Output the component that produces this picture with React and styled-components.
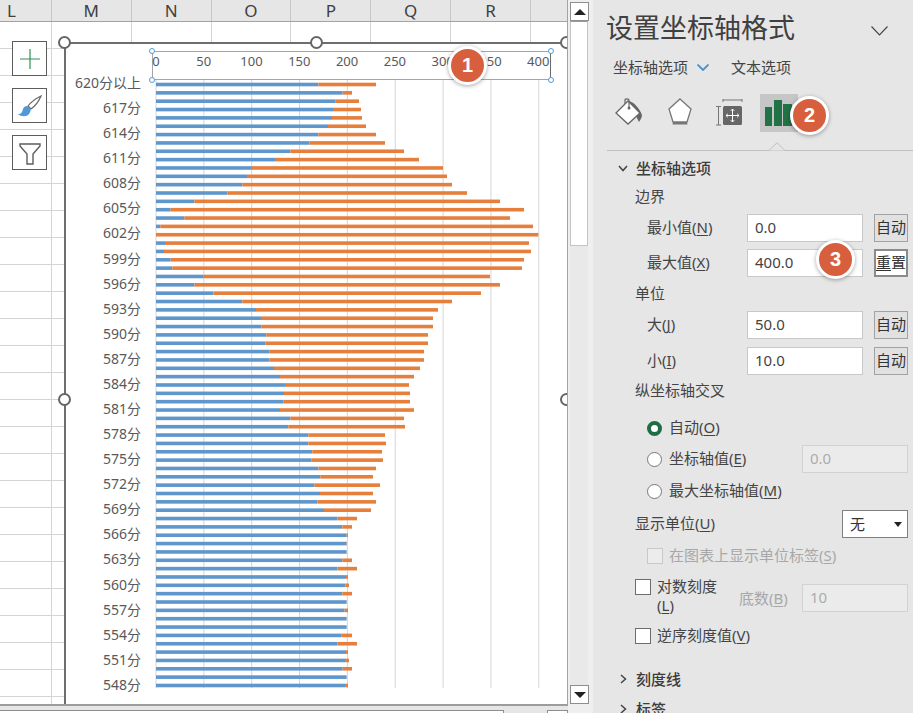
import React from "react";
import styled, { createGlobalStyle } from "styled-components";

const Global = createGlobalStyle`
  html, body { margin: 0; padding: 0; background: #e6e6e6; }
  body { font-family: "Noto Sans", "Noto Sans CJK SC", sans-serif; color: #444; }
`;

const App_ = styled.div`
  position: relative; width: 913px; height: 713px; overflow: hidden; display: flex;
`;
const Sheet = styled.div`
  width: 568px; height: 713px; flex: none; display: flex; flex-direction: column; background: #e6e6e6;
`;
const ColHeader = styled.div`
  height: 21px; flex: none; display: flex; margin-left: -28px; background: #e6e6e6; border-bottom: 1px solid #a3a3a3;
  border-right: 1px solid #a3a3a3; overflow: hidden;
`;
const ColCell = styled.div`
  width: 79.85px; flex: none; box-sizing: border-box; border-right: 1px solid #c6c6c6;
  font-size: 17px; line-height: 22px; text-align: center; color: #3f3f3f;
`;
const Grid = styled.div`
  position: relative; height: 682px; flex: none; overflow: hidden;
  border-right: 1px solid #a3a3a3; border-bottom: 2px solid #9c9c9c; box-sizing: content-box;
  background-color: #fff;
  background-image:
    repeating-linear-gradient(90deg, transparent 0, transparent 78.85px, #d4d4d4 78.85px, #d4d4d4 79.85px),
    repeating-linear-gradient(180deg, transparent 0, transparent 26px, #d4d4d4 26px, #d4d4d4 27px);
  background-position: 52px 0, 0 0;
  background-size: auto, auto;
  background-position-x: -28px, 0;
`;
const ChartTools = styled.div`
  position: absolute; left: 12px; top: 19px; display: flex; flex-direction: column; gap: 12px;
`;
const ToolButton = styled.div`
  width: 33px; height: 33px; background: #fff; border: 1px solid #5c5c5c;
  display: flex; align-items: center; justify-content: center;
`;
const Chart = styled.div`
  position: absolute; left: 64px; top: 20px; right: 0; bottom: -2px; background: #fff;
  border-left: 2px solid #6e6e6e; border-top: 2px solid #6e6e6e; display: flex;
`;
const CategoryColumn = styled.div`
  width: 75px; flex: none; padding-top: 26px; display: flex; flex-direction: column;
`;
const Category = styled.div`
  height: 25.08px; flex: none; line-height: 25px; font-size: 14px; text-align: right; color: #595959; white-space: nowrap;
`;
const PlotColumn = styled.div`
  margin-left: 9px; width: 410px; flex: none; display: flex; flex-direction: column; padding-top: 7px;
`;
const AxisBox = styled.div`
  position: relative; margin-left: 2px; width: 397px; height: 27px; flex: none;
  border: 1.5px solid #a6a6a6; border-right: 1px solid #6a6a6a; display: flex; align-items: center;
`;
const AxisTicks = styled.div`display: flex; margin-left: -21px; margin-bottom: 9px;`;
const Tick = styled.div`
  width: 47.8px; flex: none; text-align: center; font-size: 13px; line-height: 18px; color: #595959;
`;
const SmallHandle = styled.span`
  position: absolute; width: 4px; height: 4px; border-radius: 50%; background: #fff; border: 1px solid #4f9ad6;
  ${p => (p.$right ? "right: -4px;" : "left: -4px;")}
  ${p => (p.$bottom ? "bottom: -4px;" : "top: -4px;")}
`;
const BigHandle = styled.span`
  position: absolute; width: 9px; height: 9px; border-radius: 50%; background: #fff; border: 2.5px solid #666;
  ${p => p.$pos}
`;
const ScrollColumn = styled.div`
  width: 25px; flex: none; height: 713px; background: #efefef; padding: 2px 0 0 2px; box-sizing: border-box;
  display: flex; flex-direction: column;
`;
const ScrollTrack = styled.div`
  width: 18px; height: 702px; background: #e9e9e9; display: flex; flex-direction: column;
`;
const ScrollBtn = styled.div`
  height: 17px; flex: none; background: #fff; border: 1px solid #8e8e8e; width: 17px;
  display: flex; align-items: center; justify-content: center;
`;
const Arrow = styled.span`
  width: 0; height: 0; border-left: 6px solid transparent; border-right: 6px solid transparent;
  ${p => (p.$down ? "border-top: 6px solid #222;" : "border-bottom: 6px solid #222;")}
`;
const Thumb = styled.div`
  height: 223px; flex: none; width: 16px; background: #fff; border: 1px solid #c4c4c4; border-top-color: #9a9a9a;
`;
const ScrollSpace = styled.div`flex: 1;`;
const HBar = styled.div`height: 9px; flex: none; display: flex; padding-top: 4px; box-sizing: border-box;`;
const HThumb = styled.div`
  background: #fff; border-top: 1px solid #8e8e8e; border-right: 1px solid #8e8e8e;
  ${p => (p.$end ? "width: 19px; margin-left: 43px; border-left: 1px solid #8e8e8e;" : "width: 505px;")}
`;

const Panel = styled.div`
  flex: 1; height: 713px; background: #e6e6e6; display: flex; flex-direction: column; overflow: hidden; white-space: nowrap;
`;
const TitleRow = styled.div`
  height: 56px; flex: none; display: flex; align-items: center; padding-left: 13px; position: relative;
`;
const Title = styled.div`font-size: 27px; color: #404040; line-height: 56px;`;
const TitleChevron = styled.svg`position: absolute; left: 278px; top: 26px;`;
const Tabs = styled.div`
  height: 24px; flex: none; display: flex; align-items: center; padding: 0 0 3px 20px; box-sizing: border-box; font-size: 15px; color: #444;
`;
const TabChevron = styled.svg`margin: 2px 22px 0 9px;`;
const IconRow = styled.div`
  height: 38px; margin-top: 14px; flex: none; display: flex; align-items: center; padding-left: 22px;
`;
const IconSlot = styled.div`
  flex: none; display: flex; align-items: center; justify-content: center; height: 38px;
  width: ${p => p.$w}px; margin-left: ${p => p.$ml || 0}px; background: ${p => (p.$on ? "#c6c6c6" : "transparent")};
`;
const Divider = styled.div`
  position: relative; margin: 18px 0 0 14px; height: 1px; background: #c0c0c0; flex: none;
`;
const Notch = styled.svg`position: absolute; left: 161px; top: -8px;`;
const Body = styled.div`display: flex; flex-direction: column; flex: none;`;
const SectionHead = styled.div`
  height: ${p => p.$h || 26}px; margin-top: ${p => p.$mt || 0}px; flex: none; display: flex; align-items: center;
  padding: 0 0 3px 24px; font-size: 15px; font-weight: 500; color: #3c3c3c; box-sizing: border-box;
`;
const SectionChevron = styled.svg`margin-right: 7px; width: 12px; flex: none;`;
const GroupLabel = styled.div`
  height: ${p => p.$h}px; margin-top: ${p => p.$mt || 0}px; flex: none; display: flex; align-items: center;
  padding-left: 42px; font-size: 15px; color: #444; justify-content: ${p => (p.$between ? "space-between" : "flex-start")};
`;
const Caption = styled.span`margin-bottom: 3px;`;
const FieldRow = styled.div`
  height: 28px; margin-top: ${p => p.$mt || 0}px; flex: none; display: flex; align-items: center;
  padding-left: 54px; font-size: 15px; color: #444;
`;
const FieldLabel = styled.div`width: 100px; flex: none; margin-bottom: 3px;`;
const Input = styled.div`
  width: 116px; height: 28px; flex: none; box-sizing: border-box; background: #fff; border: 1px solid #c9c9c9;
  padding-left: 7px; line-height: 24px; font-size: 15px; color: #444;
`;
const Btn = styled.div`
  width: 34px; height: 28px; flex: none; margin-left: 11px; box-sizing: border-box; text-align: center;
  font-size: 15px; color: #333; background: ${p => (p.$active ? "#fff" : "#e1e1e1")};
  border: ${p => (p.$active ? "2px solid #8b8b8b" : "1px solid #a2a2a2")};
  line-height: ${p => (p.$active ? "22px" : "24px")};
`;
const Key = styled.span`text-decoration: underline; text-underline-offset: 2px;`;
const Radio = styled.span`
  width: 15px; height: 15px; flex: none; border-radius: 50%; background: #fff; box-sizing: border-box; margin-right: 7px;
  border: ${p => (p.$on ? "4px solid #1f6d45" : "1px solid #777")};
`;
const RadioText = styled.span`flex: 1; margin-bottom: 3px;`;
const Disabled = styled.div`
  width: 106px; height: 28px; flex: none; box-sizing: border-box; background: #ebebeb; border: 1px solid #d2d2d2;
  margin-right: 5px; padding-left: 7px; line-height: 24px; color: #ababab; font-size: 15px;
`;
const Select = styled.div`
  width: 66px; height: 28px; box-sizing: border-box; flex: none; margin-right: 5px; background: #fff; border: 1px solid #808080;
  display: flex; align-items: center; justify-content: space-between; padding: 0 5px 2px 7px; color: #333;
`;
const SelectArrow = styled.span`
  width: 0; height: 0; border-left: 4.5px solid transparent; border-right: 4.5px solid transparent; border-top: 5px solid #222; margin-top: 2px;
`;
const Check = styled.span`
  width: 16px; height: 16px; flex: none; box-sizing: border-box; margin-right: 6px;
  background: ${p => (p.$off ? "#ececec" : "#fff")}; border: 1px solid ${p => (p.$off ? "#c8c8c8" : "#6c6c6c")};
`;
const Muted = styled.span`color: #a8a8a8; margin-bottom: 3px;`;
const LogRow = styled.div`
  height: 38px; margin-top: 8px; flex: none; display: flex; padding-left: 42px; font-size: 15px; color: #444; position: relative;
`;
const LogLabel = styled.div`width: 82px; flex: none; line-height: 19px; white-space: normal; margin-top: -1px;`;
const LogBase = styled.div`
  width: 63px; flex: none; line-height: 38px; color: #a8a8a8; margin-top: 1px;
`;
const LogField = styled(Disabled)`margin-top: 6px;`;
const LogCheck = styled(Check)`margin-top: 1px;`;
const Badge = styled.div`
  position: absolute; width: 33px; height: 33px; border-radius: 50%; background: #d85f3e; border: 3px solid #fff;
  box-shadow: 0 1px 4px rgba(0,0,0,.35); color: #fff; font: bold 20px/33px "Liberation Sans", sans-serif; text-align: center;
`;

const data = [
  [505,678],[578,606],[557,627],[549,633],[546,636],[534,648],[505,678],[478,705],[421,762],[375,807],
  [303,879],[291,891],[277,906],[232,951],[133,1050],[62,1122],[103,1080],[31,1149],[18,1165],
  [45,1137],[42,1143],[62,1122],[67,1116],[161,1020],[133,1050],[190,993],[277,906],[318,864],[333,849],
  [335,849],[349,834],[347,834],[359,822],[358,822],[372,810],[390,792],[405,777],[402,780],
  [401,780],[390,792],[421,762],[415,765],[475,705],[475,708],[487,696],[485,699],[505,678],[511,669],
  [493,690],[510,669],[502,678],[522,663],[562,621],[577,606],[590,594],[590,591],
  [590,590],[577,606],[562,621],[588,594],[586,597],[577,606],[590,590],[584,594],[590,590],[590,590],
  [575,606],[562,621],[588,594],[585,597],[578,606],[590,590],[585,594],
];
const ticks = [0,50,100,150,200,250,300,350,400];
const labels = ["620分以上","617分","614分","611分","608分","605分","602分","599分","596分","593分","590分","587分","584分","581分","578分","575分","572分","569分","566分","563分","560分","557分","554分","551分","548分"];
const cols = ["L","M","N","O","P","Q","R","",""];

function Plot() {
  return (
    <svg width="410" height="620" viewBox="0 0 410 620" style={{ flex: "none" }}>
      {ticks.map((t, i) => (
        <line key={t} x1={6 + i * 47.85} x2={6 + i * 47.85} y1="0" y2="608" stroke="#d6d6d6" strokeWidth="1" />
      ))}
      {data.map(([b, o], i) => {
        const y = 4.5 + i * 8.347 - 1.8;
        return (
          <g key={i}>
            <rect x="6" y={y} width={Math.max(b / 3 - 6, 0)} height="3.6" fill="#5f97cc" />
            <rect x={b / 3} y={y} width={Math.max(o / 3 - b / 3, 0)} height="3.6" fill="#e67f3b" />
          </g>
        );
      })}
    </svg>
  );
}

const Chev = ({ right }) => (
  <SectionChevron height="12" viewBox="0 0 12 12">
    <path d={right ? "M4 2 L8.5 6 L4 10" : "M2 4 L6 8.5 L10 4"} fill="none" stroke="#444" strokeWidth="1.5" />
  </SectionChevron>
);

export default function App() {
  return (
    <App_>
      <Global />
      <Sheet>
        <ColHeader>{cols.map((c, i) => <ColCell key={i}>{c}</ColCell>)}</ColHeader>
        <Grid>
          <ChartTools>
            <ToolButton>
              <svg width="22" height="22" viewBox="0 0 22 22"><path d="M11 1 V21 M1 11 H21" stroke="#2f8f55" strokeWidth="1.2" fill="none" /></svg>
            </ToolButton>
            <ToolButton>
              <svg width="26" height="26" viewBox="0 0 26 26">
                <path d="M24 3 C20 5 14 9 11 13 L14 16 C18 13 22 8 24 3 Z" fill="#fff" stroke="#666" strokeWidth="1.2" />
                <path d="M10 13 C6 13 6 17 5 19 C4 21 2 21 1 21 C4 24 10 24 12 21 C14 19 14 16 13 15 Z" fill="#4f9ad6" />
              </svg>
            </ToolButton>
            <ToolButton>
              <svg width="24" height="24" viewBox="0 0 24 24">
                <path d="M2 3 H22 V5 L15 13 V23 H9 V13 L2 5 Z" fill="#fff" stroke="#5c5c5c" strokeWidth="1.4" />
              </svg>
            </ToolButton>
          </ChartTools>
          <Chart>
            <CategoryColumn>{labels.map(l => <Category key={l}>{l}</Category>)}</CategoryColumn>
            <PlotColumn>
              <AxisBox>
                <AxisTicks>{ticks.map(t => <Tick key={t}>{t}</Tick>)}</AxisTicks>
                <SmallHandle /><SmallHandle $bottom /><SmallHandle $right /><SmallHandle $right $bottom />
              </AxisBox>
              <Plot />
            </PlotColumn>
            <BigHandle $pos="left: -8px; top: -8px;" />
            <BigHandle $pos="left: 244px; top: -8px;" />
            <BigHandle $pos="left: 494px; top: -8px;" />
            <BigHandle $pos="left: -8px; top: 349px;" />
            <BigHandle $pos="left: 494px; top: 349px;" />
          </Chart>
        </Grid>
        <HBar><HThumb /><HThumb $end /></HBar>
      </Sheet>
      <ScrollColumn>
        <ScrollTrack>
          <ScrollBtn><Arrow /></ScrollBtn>
          <Thumb />
          <ScrollSpace />
          <ScrollBtn><Arrow $down /></ScrollBtn>
        </ScrollTrack>
      </ScrollColumn>
      <Panel>
        <TitleRow>
          <Title>设置坐标轴格式</Title>
          <TitleChevron width="17" height="10" viewBox="0 0 17 10"><path d="M0.5 0.5 L8.5 9 L16.5 0.5" fill="none" stroke="#444" strokeWidth="1.1" /></TitleChevron>
        </TitleRow>
        <Tabs>
          <span>坐标轴选项</span>
          <TabChevron width="12" height="7" viewBox="0 0 12 7"><path d="M0.5 0.5 L6 6 L11.5 0.5" fill="none" stroke="#4a90c9" strokeWidth="1.8" /></TabChevron>
          <span>文本选项</span>
        </Tabs>
        <IconRow>
          <IconSlot $w={30}>
            <svg width="30" height="30" viewBox="0 0 30 30">
              <path d="M14 3 C19 4 25 11 27 17 C27 20 25 22 24 24 L18 12 Z" fill="#666" />
              <path d="M1 15 L13 3 L25 15 L13 26 Z" fill="#fff" stroke="#666" strokeWidth="1.3" />
              <path d="M10 6 V2 C10 0.5 14 0.5 14 2 V9" fill="none" stroke="#666" strokeWidth="1.2" />
              <circle cx="14" cy="10" r="1.5" fill="#666" />
            </svg>
          </IconSlot>
          <IconSlot $w={26} $ml={22}>
            <svg width="26" height="30" viewBox="0 0 26 30">
              <path d="M13 1 L24 11 L20 24 H6 L2 11 Z" fill="#fff" stroke="#777" strokeWidth="1.3" />
              <path d="M6 24 H20 L20.5 26.5 H5.5 Z" fill="#777" />
            </svg>
          </IconSlot>
          <IconSlot $w={28} $ml={22}>
            <svg width="28" height="28" viewBox="0 0 28 28">
              <path d="M8 -1 V3 M27 -1 V3 M8 1 H27" fill="none" stroke="#777" strokeWidth="1" />
              <path d="M1 7.5 H6 M1 26 H6 M3.5 7.5 V26" fill="none" stroke="#777" strokeWidth="1" />
              <rect x="8" y="7" width="19" height="19" rx="1.5" fill="#666" />
              <path d="M17.5 10 V23 M11 16.5 H24 M15.8 11.8 L17.5 10 L19.2 11.8 M15.8 21.2 L17.5 23 L19.2 21.2 M12.8 14.8 L11 16.5 L12.8 18.2 M22.2 14.8 L24 16.5 L22.2 18.2" fill="none" stroke="#fff" strokeWidth="1" />
            </svg>
          </IconSlot>
          <IconSlot $w={38} $ml={17} $on>
            <svg width="28" height="27" viewBox="0 0 28 27">
              <rect x="0" y="7" width="7" height="19" fill="#217346" />
              <rect x="9" y="0" width="8" height="26" fill="#217346" />
              <rect x="18" y="4" width="9" height="22" fill="#217346" />
            </svg>
          </IconSlot>
        </IconRow>
        <Divider>
          <Notch width="18" height="9" viewBox="0 0 18 9"><path d="M0 8.5 H1 L9 0.7 L17 8.5 H18" fill="#e6e6e6" stroke="#c0c0c0" strokeWidth="1" /></Notch>
        </Divider>
        <Body>
          <SectionHead $mt={5}><Chev />坐标轴选项</SectionHead>
          <GroupLabel $h={30}><Caption>边界</Caption></GroupLabel>
          <FieldRow $mt={2}><FieldLabel>最小值(<Key>N</Key>)</FieldLabel><Input>0.0</Input><Btn>自动</Btn></FieldRow>
          <FieldRow $mt={7}><FieldLabel>最大值(<Key>X</Key>)</FieldLabel><Input>400.0</Input><Btn $active><Key>重</Key>置</Btn></FieldRow>
          <GroupLabel $h={34}><Caption>单位</Caption></GroupLabel>
          <FieldRow><FieldLabel>大(<Key>J</Key>)</FieldLabel><Input>50.0</Input><Btn>自动</Btn></FieldRow>
          <FieldRow $mt={8}><FieldLabel>小(<Key>I</Key>)</FieldLabel><Input>10.0</Input><Btn>自动</Btn></FieldRow>
          <GroupLabel $h={32}><Caption>纵坐标轴交叉</Caption></GroupLabel>
          <FieldRow $mt={7}><Radio $on /><RadioText>自动(<Key>O</Key>)</RadioText></FieldRow>
          <FieldRow $mt={3}><Radio /><RadioText>坐标轴值(<Key>E</Key>)</RadioText><Disabled>0.0</Disabled></FieldRow>
          <FieldRow $mt={4}><Radio /><RadioText>最大坐标轴值(<Key>M</Key>)</RadioText></FieldRow>
          <GroupLabel $h={28} $mt={5} $between><Caption>显示单位(<Key>U</Key>)</Caption><Select>无<SelectArrow /></Select></GroupLabel>
          <FieldRow $mt={4}><Check $off /><Muted>在图表上显示单位标签(<Key>S</Key>)</Muted></FieldRow>
          <LogRow>
            <LogCheck />
            <LogLabel>对数刻度<br />(<Key>L</Key>)</LogLabel>
            <LogBase>底数(<Key>B</Key>)</LogBase>
            <LogField>10</LogField>
          </LogRow>
          <GroupLabel $h={28} $mt={6}><Check /><Caption>逆序刻度值(<Key>V</Key>)</Caption></GroupLabel>
          <SectionHead $mt={16} $h={28}><Chev right />刻度线</SectionHead>
          <SectionHead $mt={2} $h={28}><Chev right />标签</SectionHead>
        </Body>
      </Panel>
      <Badge style={{ left: 448, top: 46 }}>1</Badge>
      <Badge style={{ left: 790, top: 96 }}>2</Badge>
      <Badge style={{ left: 816, top: 240 }}>3</Badge>
    </App_>
  );
}
